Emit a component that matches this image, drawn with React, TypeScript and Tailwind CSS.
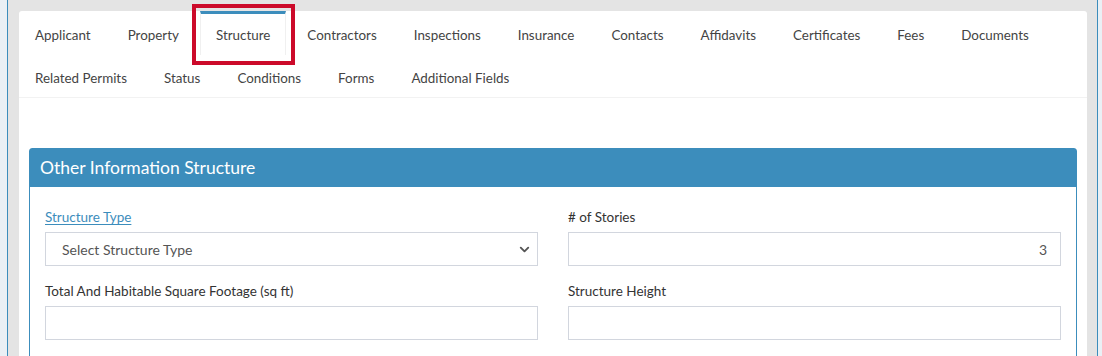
import { ChevronDown } from "lucide-react";

const row1 = [
  "Applicant",
  "Property",
  "Structure",
  "Contractors",
  "Inspections",
  "Insurance",
  "Contacts",
  "Affidavits",
  "Certificates",
  "Fees",
  "Documents",
];
const row2 = ["Related Permits", "Status", "Conditions", "Forms", "Additional Fields"];

const font = { fontFamily: "Lato, 'Open Sans', sans-serif" };

function Tab({ label, active }: { label: string; active?: boolean }) {
  if (active) {
    return (
      <div className="relative mr-[5px] flex h-[44px] items-center border-x border-t-[3px] border-x-[#f0f0f0] border-t-[#3c8dbc] px-[15px] pt-[2px] text-[13.4px] text-[#444]">
        {label}
        <span className="pointer-events-none absolute -left-[9px] -right-[10px] -top-[10px] -bottom-[10px] border-[4px] border-[#cc0a2a]" />
      </div>
    );
  }
  return (
    <div className="mr-[5px] flex h-[44px] items-center border-x border-t-[3px] border-transparent px-[15px] pt-[2px] text-[13.4px] text-[#444]">
      {label}
    </div>
  );
}

function Field({
  label,
  link,
  children,
}: {
  label: string;
  link?: boolean;
  children: React.ReactNode;
}) {
  return (
    <div className="flex flex-col">
      <div
        className={
          link
            ? "mb-[5px] h-[20px] text-[13.5px] leading-[20px] text-[#3c8dbc] underline underline-offset-2"
            : "mb-[5px] h-[20px] text-[13.5px] leading-[20px] text-[#333]"
        }
      >
        {label}
      </div>
      {children}
    </div>
  );
}

export default function App() {
  return (
    <div className="flex h-[356px] w-[1102px] overflow-hidden bg-[#eaf0f5]" style={font}>
      <div className="w-[7px] shrink-0" />
      <div className="flex flex-1 border-x border-[#3c8dbc] bg-[#e4e4e4] pl-[11px] pr-[10px] pt-[11px]">
        <div className="flex flex-1 flex-col rounded-t-[3px] bg-white">
          <div className="border-b border-[#f2f2f2]">
            <div className="flex">
              {row1.map((t) => (
                <Tab key={t} label={t} active={t === "Structure"} />
              ))}
            </div>
            <div className="flex h-[42px]">
              {row2.map((t) => (
                <div
                  key={t}
                  className="mr-[5px] flex items-center border-x border-transparent px-[15px] pt-[4px] text-[13.4px] text-[#444]"
                >
                  {t}
                </div>
              ))}
            </div>
          </div>

          <div className="px-[10px] pt-[50px]">
            <div className="rounded-t-[3px] border border-[#3c8dbc]">
              <div className="flex h-[38px] items-center bg-[#3c8dbc] px-[10px] text-[17.5px] text-white">
                Other Information Structure
              </div>
              <div className="grid grid-cols-2 gap-x-[30px] gap-y-[15px] px-[15px] pb-[20px] pt-[20px]">
                <Field label="Structure Type" link>
                  <div className="flex h-[34px] items-center justify-between border border-[#d2d6de] pl-[16px] pr-[5px] text-[14px] text-[#555]">
                    <span>Select Structure Type</span>
                    <ChevronDown size={15} strokeWidth={3} className="text-[#555]" />
                  </div>
                </Field>
                <Field label="# of Stories">
                  <div className="flex h-[34px] items-center justify-end border border-[#d2d6de] px-[13px] text-[14px] text-[#555]">
                    3
                  </div>
                </Field>
                <Field label="Total And Habitable Square Footage (sq ft)">
                  <div className="h-[34px] border border-[#d2d6de]" />
                </Field>
                <Field label="Structure Height">
                  <div className="h-[34px] border border-[#d2d6de]" />
                </Field>
              </div>
            </div>
          </div>
        </div>
      </div>
      <div className="w-[4px] shrink-0" />
    </div>
  );
}
